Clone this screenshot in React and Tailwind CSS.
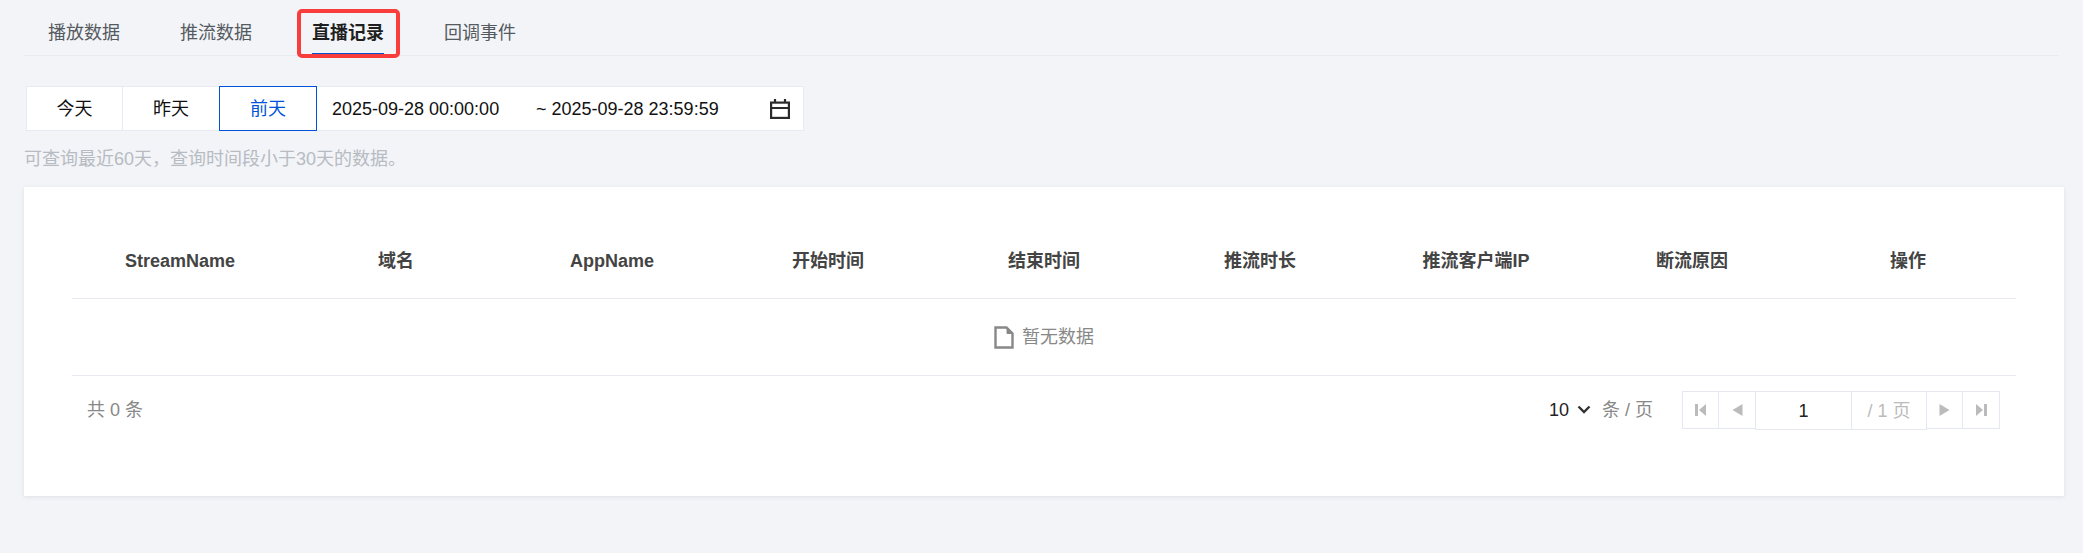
import React from "react";

const FONT = { fontFamily: '"Liberation Sans", "Noto Sans CJK SC", sans-serif' };
const headers = ["StreamName", "域名", "AppName", "开始时间", "结束时间", "推流时长", "推流客户端IP", "断流原因", "操作"];

function PagerIcon({ kind }) {
  const paths = {
    first: "M0 0h3v12H0zM11 0v12L4 6z",
    prev: "M10.5 0v12L0.5 6z",
    next: "M0.5 0v12l10-6z",
    last: "M8 0h3v12H8zM0 0v12l7-6z",
  };
  return (
    <svg width="11" height="12" viewBox="0 0 11 12" fill="#bbbbbb">
      <path d={paths[kind]} />
    </svg>
  );
}

function PagerButton({ kind, className }) {
  return (
    <div className={"flex h-[38px] items-center justify-center border border-[#e5e8f0] bg-white " + className}>
      <PagerIcon kind={kind} />
    </div>
  );
}

export default function App() {
  return (
    <div style={FONT} className="flex h-[553px] w-[2083px] flex-col overflow-hidden bg-[#f2f4f8] px-6 text-[18px] leading-[26px]">
      <div className="flex h-[56px] gap-[60px] border-b border-[#e7eaef] pl-6">
        {["播放数据", "推流数据", "直播记录", "回调事件"].map((t, i) =>
          i === 2 ? (
            <div key={t} className="relative h-[56px] pt-5 font-bold text-[#1f1f1f]">
              {t}
              <div className="absolute bottom-[1px] left-0 right-0 h-[2px] bg-[#0052d9]" />
              <div className="absolute -left-[15px] -right-[16px] top-[9px] h-[49px] rounded-[5px] border-4 border-[#f93c3c]" />
            </div>
          ) : (
            <div key={t} className="pt-5 text-[#555a61]">{t}</div>
          )
        )}
      </div>

      <div className="mt-[30px] ml-[2px] flex h-[45px] w-[778px] items-stretch border border-[#e7eaf3] bg-white text-[#111111]">
        <div className="flex w-[96px] items-center justify-center border-r border-[#e7eaf3]">今天</div>
        <div className="flex w-[96px] items-center justify-center">昨天</div>
        <div className="-my-px flex w-[98px] items-center justify-center border border-[#0052d9] text-[#0052d9]">前天</div>
        <div className="flex flex-1 items-center pl-[15px] pr-[13px]">
          <span className="w-[204px]">2025-09-28 00:00:00</span>
          <span>~ 2025-09-28 23:59:59</span>
          <svg className="ml-auto" width="20" height="20" viewBox="0 0 20 20" fill="none" stroke="#2b2b2b" strokeWidth="2.2">
            <rect x="1.1" y="3.6" width="17.8" height="15.3" />
            <path d="M1 9h18M5 0v4M15 0v4" />
          </svg>
        </div>
      </div>

      <div className="mt-[15px] text-[#b7bbc2]">可查询最近60天，查询时间段小于30天的数据。</div>

      <div className="mt-[15px] h-[309px] w-[2040px] bg-white px-12 shadow-[0_1px_4px_rgba(54,58,80,0.1)]">
        <div className="grid h-[112px] grid-cols-9 border-b border-[#e7eaf3] pt-[61px] font-bold text-[#444444]">
          {headers.map((h) => (
            <div key={h} className="text-center">{h}</div>
          ))}
        </div>
        <div className="flex h-[77px] items-center justify-center gap-[8px] border-b border-[#e7eaf3] text-[#888888]">
          <svg width="20" height="23" viewBox="0 0 20 23" fill="none" stroke="#888888" strokeWidth="2.4">
            <path d="M1.5 1.5h11l6 6v14h-17z" />
            <path d="M13 2v5.5h5.5z" fill="#888888" strokeWidth="1" />
          </svg>
          <span>暂无数据</span>
        </div>
        <div className="flex items-start justify-between pr-4 pt-[15px]">
          <div className="pl-[15px] pt-[6px] text-[#888888]">共 0 条</div>
          <div className="flex items-start">
            <div className="mr-[29px] flex h-[38px] items-center">
              <span className="text-[#222222]">10</span>
              <svg className="ml-[8px] mr-[11px]" width="14" height="10" viewBox="0 0 14 10" fill="none" stroke="#333333" strokeWidth="2.4">
                <path d="M1.5 1.5L7 7l5.5-5.5" />
              </svg>
              <span className="text-[#888888]">条 / 页</span>
            </div>
            <PagerButton kind="first" className="w-[37px]" />
            <PagerButton kind="prev" className="-ml-px w-[38px]" />
            <div className="-ml-px flex h-[39px] w-[97px] items-center justify-center border border-[#e5e8f0] text-[#222222]">1</div>
            <div className="-ml-px flex h-[39px] w-[76px] items-center justify-center border border-[#e5e8f0] text-[#bbbbbb]">/ 1 页</div>
            <PagerButton kind="next" className="-ml-px w-[37px]" />
            <PagerButton kind="last" className="-ml-px w-[38px]" />
          </div>
        </div>
      </div>
    </div>
  );
}
